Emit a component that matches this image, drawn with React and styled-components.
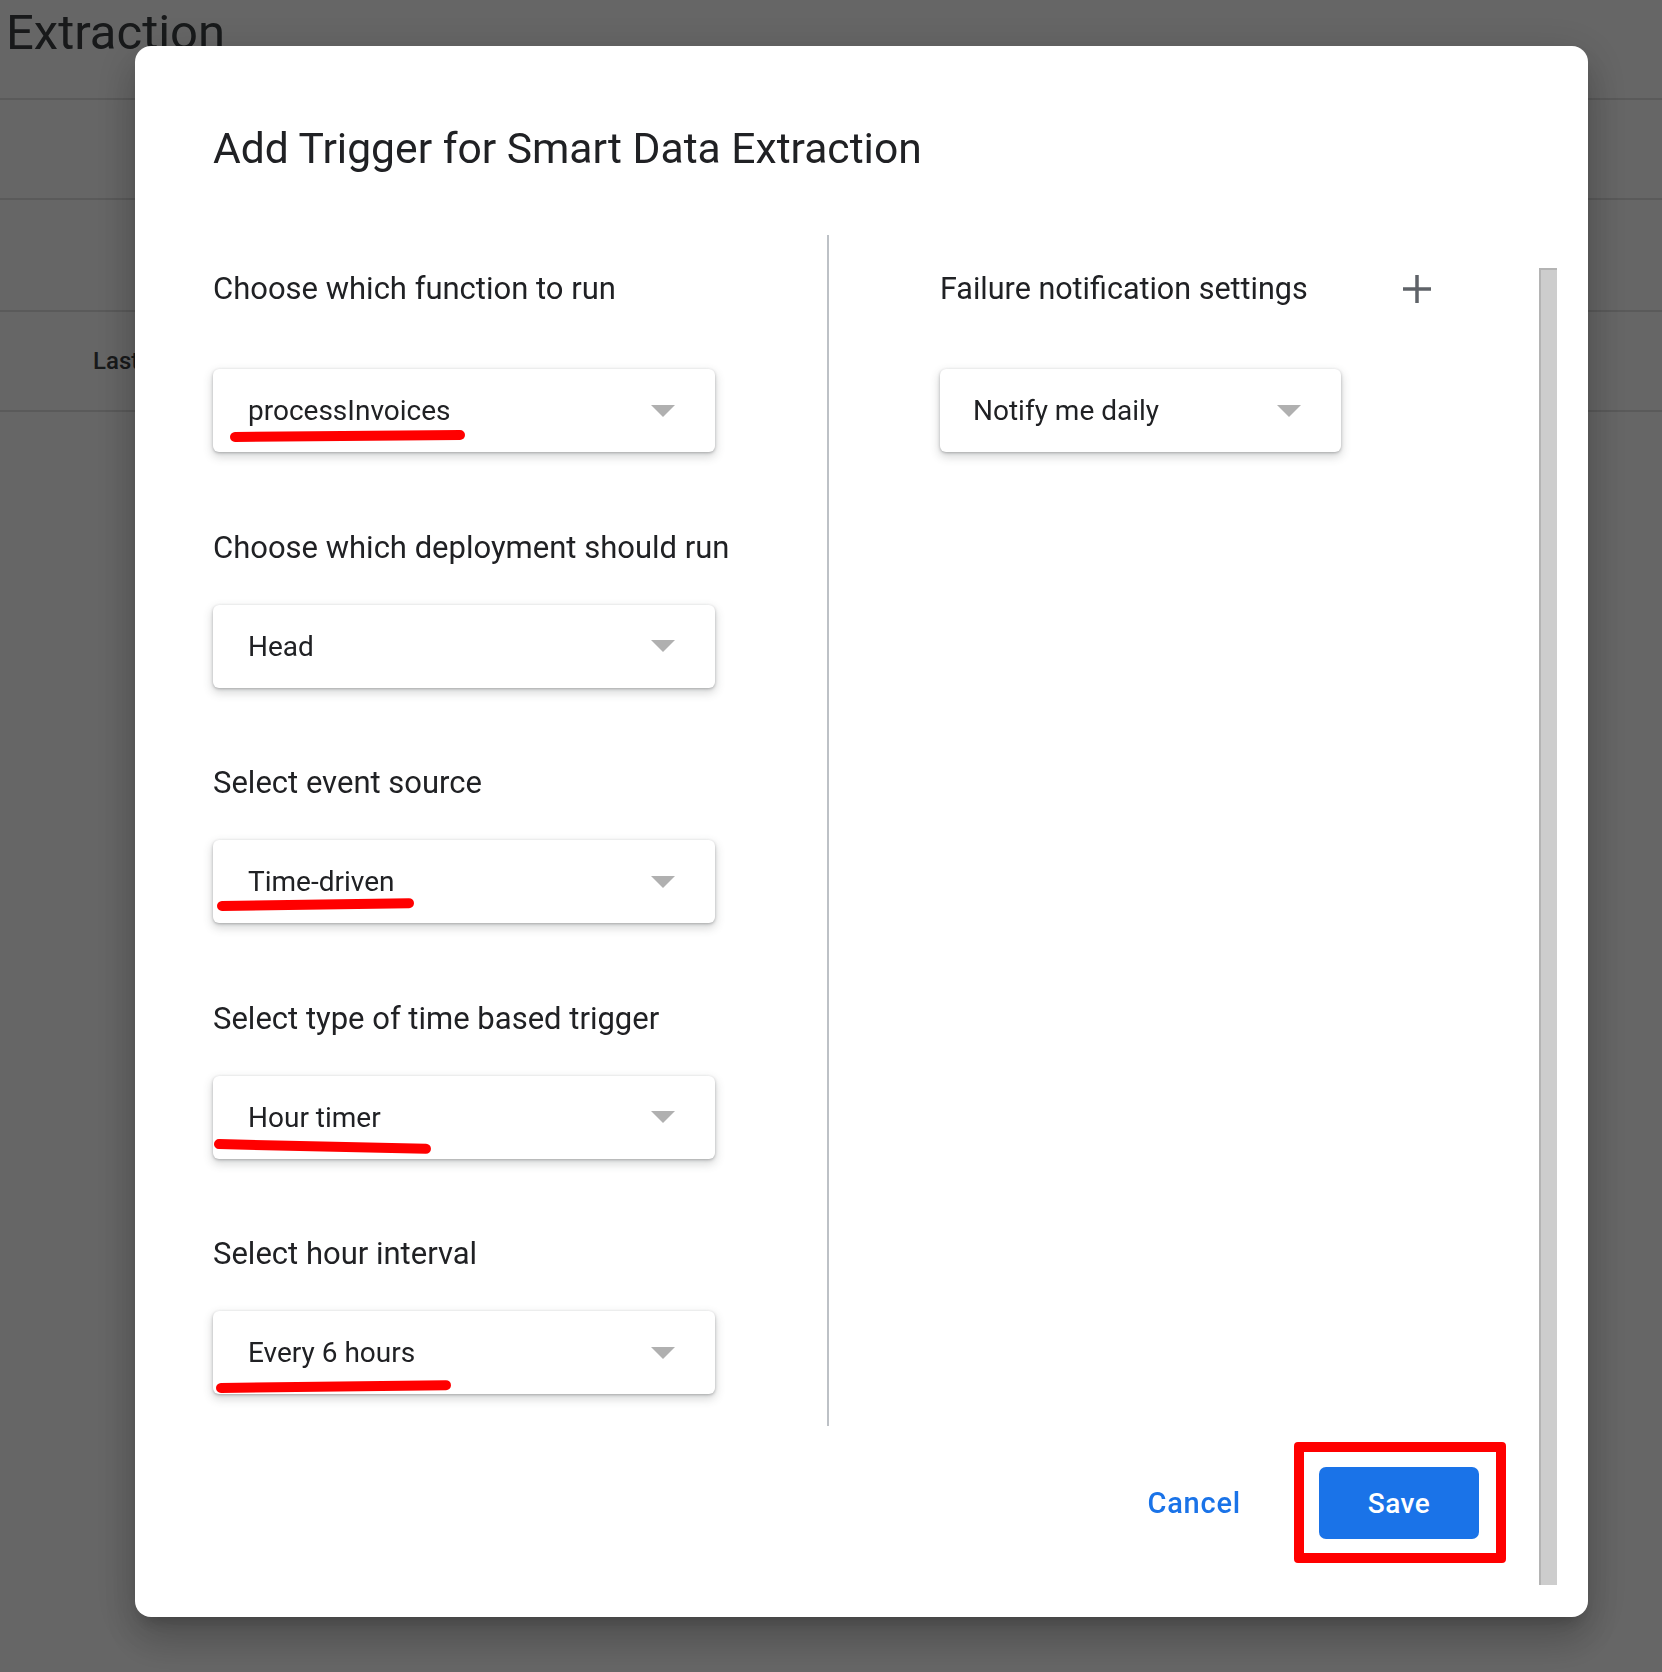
import React from 'react';
import styled, { createGlobalStyle } from 'styled-components';

const GlobalStyle = createGlobalStyle`
  html, body {
    margin: 0;
    padding: 0;
    background: #ffffff;
  }
  body {
    font-family: Roboto, "Liberation Sans", Arial, sans-serif;
    color: #3c4043;
  }
  * {
    box-sizing: border-box;
  }
`;

// page behind the dialog
const Page = styled.div`
  min-height: 1672px;
  background: #ffffff;
`;

const Band = styled.div`
  height: ${(p) => p.$h}px;
  border-bottom: 2px solid #e0e0e0;
  display: flex;
  align-items: ${(p) => (p.$top ? 'flex-start' : 'center')};
  padding-left: ${(p) => p.$pad || 0}px;
`;

const PageTitle = styled.h1`
  margin: 4px 0 0;
  font-size: 49px;
  font-weight: 400;
  line-height: 57px;
  color: #3c4043;
  white-space: nowrap;
`;

const ColumnHead = styled.span`
  font-size: 24px;
  font-weight: 500;
  color: #3c4043;
  white-space: nowrap;
`;

// dialog
const Scrim = styled.div`
  position: fixed;
  inset: 0;
  background: rgba(0, 0, 0, 0.6);
  padding: 46px 0 0 135px;
`;

const Dialog = styled.div`
  width: 1453px;
  height: 1571px;
  background: #ffffff;
  border-radius: 16px;
  box-shadow: 0 11px 15px -7px rgba(0, 0, 0, 0.2), 0 24px 38px 3px rgba(0, 0, 0, 0.14),
    0 9px 46px 8px rgba(0, 0, 0, 0.12);
  padding: 76px 31px 32px 78px;
  display: flex;
  flex-direction: column;
`;

const Title = styled.h2`
  margin: 0 0 61px;
  font-size: 42.6px;
  line-height: 52px;
  font-weight: 400;
  color: #202124;
  white-space: nowrap;
`;

const Body = styled.div`
  flex: 1;
  display: flex;
  min-height: 0;
`;

const Main = styled.div`
  flex: 1;
  display: flex;
  flex-direction: column;
`;

const Columns = styled.div`
  display: flex;
  height: 1191px;
`;

const LeftCol = styled.div`
  width: 614px;
  padding: 36px 0 0;
  display: flex;
  flex-direction: column;
`;

const Divider = styled.div`
  width: 2px;
  background: #bdc1c6;
`;

const RightCol = styled.div`
  padding: 36px 0 0 111px;
  display: flex;
  flex-direction: column;
`;

const Field = styled.div`
  display: flex;
  flex-direction: column;
  margin-bottom: ${(p) => (p.$last ? 0 : 77.6)}px;
`;

const Label = styled.div`
  font-size: 31px;
  line-height: 36px;
  color: #202124;
  white-space: nowrap;
  margin-bottom: ${(p) => (p.$lead ? 62 : 39)}px;
`;

const HeadLabel = styled(Label)`
  margin-bottom: 0;
  font-size: 30.5px;
`;

const SectionHead = styled.div`
  width: 501px;
  height: 36px;
  display: flex;
  align-items: center;
  justify-content: space-between;
  margin-bottom: 62px;
`;

const IconButton = styled.button`
  width: 48px;
  height: 36px;
  border: 0;
  padding: 0;
  background: transparent;
  display: flex;
  align-items: center;
  justify-content: center;
  color: #5f6368;
`;

const Select = styled.div`
  position: relative;
  width: ${(p) => p.$w}px;
  height: 83px;
  border-radius: 6px;
  background: #ffffff;
  box-shadow: 0 1px 3px rgba(60, 64, 67, 0.35), 0 4px 10px 1px rgba(60, 64, 67, 0.2);
  display: flex;
  align-items: center;
  justify-content: space-between;
  padding: 0 40px 0 ${(p) => p.$pl}px;
`;

const Value = styled.span`
  font-size: 28px;
  color: #202124;
  white-space: nowrap;
`;

// red hand-drawn underline over the screenshot
const Scribble = styled.span`
  position: absolute;
  left: ${(p) => p.$x}px;
  top: ${(p) => p.$y}px;
  width: ${(p) => p.$w}px;
  height: 10px;
  border-radius: 5px;
  background: #ff0000;
  transform: rotate(${(p) => p.$r}deg);
  transform-origin: left center;
`;

const Footer = styled.div`
  display: flex;
  justify-content: flex-end;
  align-items: center;
  gap: 78px;
  padding: 41px 60px 0 0;
`;

const TextButton = styled.button`
  border: 0;
  padding: 0;
  background: transparent;
  font-family: inherit;
  font-size: 29px;
  letter-spacing: 0.8px;
  font-weight: 500;
  color: #1a73e8;
`;

const Highlight = styled.div`
  position: relative;
`;

const Frame = styled.span`
  position: absolute;
  left: -25px;
  right: -27px;
  top: -25px;
  bottom: -24px;
  border: 10px solid #ff0000;
  border-radius: 4px;
  pointer-events: none;
`;

const PrimaryButton = styled.button`
  width: 160px;
  height: 72px;
  border: 0;
  border-radius: 7px;
  background: #1a73e8;
  color: #ffffff;
  font-family: inherit;
  font-size: 28px;
  letter-spacing: 0.5px;
  font-weight: 500;
`;

const Scrollbar = styled.div`
  width: 18px;
  margin-top: 33px;
  background: #cdcdcd;
  border-left: 2px solid #b4b4b4;
  border-top: 2px solid #b4b4b4;
`;

const Caret = () => (
  <svg width="24" height="12" viewBox="0 0 24 12">
    <polygon points="0,0 24,0 12,12" fill="#b0b0b0" />
  </svg>
);

const Plus = () => (
  <svg width="28" height="28" viewBox="0 0 28 28">
    <rect x="12.25" y="0" width="3.5" height="28" fill="currentColor" />
    <rect x="0" y="12.25" width="28" height="3.5" fill="currentColor" />
  </svg>
);

const fields = [
  { label: 'Choose which function to run', value: 'processInvoices', mark: { x: 17, y: 63, w: 235, r: -0.5 } },
  { label: 'Choose which deployment should run', value: 'Head' },
  { label: 'Select event source', value: 'Time-driven', mark: { x: 4, y: 61, w: 197, r: -0.85 } },
  { label: 'Select type of time based trigger', value: 'Hour timer', mark: { x: 1, y: 63, w: 217, r: 1.3 } },
  { label: 'Select hour interval', value: 'Every 6 hours', mark: { x: 3, y: 72, w: 235, r: -0.7 } },
];

export default function App() {
  return (
    <>
      <GlobalStyle />
      <Page>
        <Band $h={100} $top $pad={6}>
          <PageTitle>Extraction</PageTitle>
        </Band>
        <Band $h={100} />
        <Band $h={112} />
        <Band $h={100} $pad={93}>
          <ColumnHead>Last run</ColumnHead>
        </Band>
      </Page>

      <Scrim>
        <Dialog>
          <Title>Add Trigger for Smart Data Extraction</Title>
          <Body>
            <Main>
              <Columns>
                <LeftCol>
                  {fields.map((f, i) => (
                    <Field key={f.label} $last={i === fields.length - 1}>
                      <Label $lead={i === 0}>{f.label}</Label>
                      <Select $w={502} $pl={35}>
                        <Value>{f.value}</Value>
                        <Caret />
                        {f.mark && <Scribble $x={f.mark.x} $y={f.mark.y} $w={f.mark.w} $r={f.mark.r} />}
                      </Select>
                    </Field>
                  ))}
                </LeftCol>
                <Divider />
                <RightCol>
                  <SectionHead>
                    <HeadLabel as="span">Failure notification settings</HeadLabel>
                    <IconButton>
                      <Plus />
                    </IconButton>
                  </SectionHead>
                  <Select $w={401} $pl={33}>
                    <Value>Notify me daily</Value>
                    <Caret />
                  </Select>
                </RightCol>
              </Columns>
              <Footer>
                <TextButton>Cancel</TextButton>
                <Highlight>
                  <PrimaryButton>Save</PrimaryButton>
                  <Frame />
                </Highlight>
              </Footer>
            </Main>
            <Scrollbar />
          </Body>
        </Dialog>
      </Scrim>
    </>
  );
}
